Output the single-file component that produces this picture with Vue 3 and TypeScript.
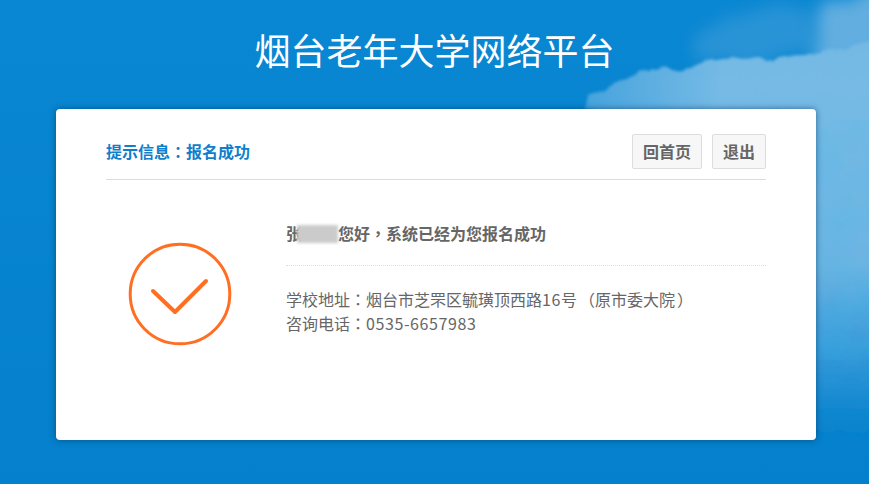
<script setup lang="ts">
const title = '烟台老年大学网络平台'
</script>

<template>
  <div class="page">
    <svg class="clouds" width="869" height="484" viewBox="0 0 869 484" aria-hidden="true">
      <defs>
        <filter id="edge" x="-10%" y="-10%" width="120%" height="120%">
          <feTurbulence type="fractalNoise" baseFrequency="0.05" numOctaves="4" seed="7" result="n" />
          <feDisplacementMap in="SourceGraphic" in2="n" scale="12" xChannelSelector="R" yChannelSelector="G" />
          <feGaussianBlur stdDeviation="1.8" />
        </filter>
        <filter id="haze" x="-30%" y="-30%" width="160%" height="160%">
          <feTurbulence type="fractalNoise" baseFrequency="0.03" numOctaves="3" seed="3" result="n" />
          <feDisplacementMap in="SourceGraphic" in2="n" scale="26" xChannelSelector="R" yChannelSelector="G" />
          <feGaussianBlur stdDeviation="8" />
        </filter>
        <filter id="mottle" x="0" y="0" width="100%" height="100%">
          <feTurbulence type="fractalNoise" baseFrequency="0.022" numOctaves="4" seed="11" />
          <feColorMatrix type="matrix" values="0 0 0 0 0.04  0 0 0 0 0.5  0 0 0 0 0.82  1.6 0 0 0 -0.62" />
        </filter>
        <linearGradient id="fade" gradientUnits="userSpaceOnUse" x1="0" y1="0" x2="0" y2="425">
          <stop offset="0" stop-color="#6fb6e3" />
          <stop offset="0.2" stop-color="#76bae5" />
          <stop offset="0.62" stop-color="#6cb4e2" />
          <stop offset="0.78" stop-color="#429fdb" />
          <stop offset="1" stop-color="#0883ce" />
        </linearGradient>
        <linearGradient id="leftFade" gradientUnits="userSpaceOnUse" x1="580" y1="0" x2="720" y2="0">
          <stop offset="0" stop-color="#fff" stop-opacity="0.55" />
          <stop offset="1" stop-color="#fff" stop-opacity="1" />
        </linearGradient>
        <mask id="bodyMask" maskUnits="userSpaceOnUse" x="0" y="0" width="869" height="484">
          <rect x="560" y="0" width="309" height="484" fill="url(#leftFade)" />
        </mask>
      </defs>
      <path filter="url(#haze)" fill="#3d9cd9" opacity="0.6" d="M688 62 L700 30 L745 22 L780 5 L815 10 L815 45 L780 62Z" />
      <path filter="url(#haze)" fill="#62aee0" d="M815 70 L812 40 L830 0 L890 -20 L890 90Z" />
      <g mask="url(#bodyMask)">
        <path filter="url(#edge)" fill="url(#fade)" d="M584 112 L590 98 L603 91 L622 80 L642 72 L668 70 L692 67 L708 61 L732 58 L775 57 L805 56 L830 50 L880 40 L880 430 L780 430 L780 112Z" />
      </g>
      <rect x="816" y="120" width="53" height="240" fill="#0a80d1" opacity="0.28" filter="url(#mottle)" />
    </svg>

    <h1 class="title">{{ title }}</h1>

    <main class="card">
      <header class="card-head">
        <h2 class="notice">提示信息<span class="cjk-mid">：</span>报名成功</h2>
        <nav class="actions">
          <a class="btn">回首页</a>
          <a class="btn">退出</a>
        </nav>
      </header>

      <section class="body">
        <div class="icon-col">
          <svg width="104" height="104" viewBox="0 0 104 104" aria-hidden="true">
            <circle cx="52" cy="52" r="49.8" fill="none" stroke="#ff6e21" stroke-width="3" />
            <path d="M25 49 L47 70 L78 39" fill="none" stroke="#ff6e21" stroke-width="4" stroke-linecap="round" stroke-linejoin="round" />
          </svg>
        </div>
        <div class="info">
          <p class="greeting">张<span class="masked"></span>您好<span class="cjk-mid">，</span>系统已经为您报名成功</p>
          <div class="details">
            <p>学校地址<span class="cjk-mid">：</span>烟台市芝罘区毓璜顶西路<span class="num">16</span>号<span class="cjk-mid paren">（</span>原市委大院<span class="cjk-mid paren">）</span></p>
            <p>咨询电话<span class="cjk-mid">：</span><span class="num">0535-6657983</span></p>
          </div>
        </div>
      </section>
    </main>
  </div>
</template>

<style>
html,
body {
  margin: 0;
  padding: 0;
}
</style>

<style scoped>
.page {
  position: relative;
  box-sizing: border-box;
  height: 484px;
  overflow: hidden;
  padding-top: 21px;
  background: linear-gradient(180deg, #0a87d2 0%, #0480cc 100%);
  font-family: "Noto Sans CJK SC", "Noto Sans", sans-serif;
  color: #666;
}
.clouds {
  position: absolute;
  left: 0;
  top: 0;
}
.title {
  position: relative;
  margin: 0 0 32px;
  height: 56px;
  line-height: 56px;
  text-align: center;
  font-size: 36px;
  font-weight: 400;
  color: #fff;
}
.card {
  position: relative;
  box-sizing: border-box;
  width: 760px;
  height: 331px;
  margin-left: 56px;
  padding: 25px 50px 0;
  background: #fff;
  border-radius: 4px;
  box-shadow: 0 0 6px rgba(0, 50, 90, 0.6);
}
.card-head {
  display: flex;
  align-items: flex-start;
  justify-content: space-between;
  height: 45px;
  border-bottom: 1px solid #ddd;
}
.notice {
  margin: 0;
  line-height: 35px;
  font-size: 16px;
  font-weight: 700;
  color: #0f7fcc;
}
.cjk-mid {
  font-family: "Noto Sans CJK TC", sans-serif;
}
.paren {
  margin-left: 2px;
}
.num {
  letter-spacing: 0.6px;
}
.actions {
  display: flex;
  gap: 10px;
}
.btn {
  box-sizing: border-box;
  height: 35px;
  line-height: 33px;
  padding: 0 10px;
  border: 1px solid #ddd;
  border-radius: 2px;
  background: #f7f7f7;
  font-size: 16px;
  font-weight: 700;
  color: #666;
}
.body {
  display: flex;
  padding-top: 34px;
}
.icon-col {
  width: 180px;
  padding-top: 28px;
  padding-left: 22px;
  box-sizing: border-box;
}
.info {
  flex: 1;
}
.greeting {
  margin: 0;
  height: 51px;
  line-height: 38px;
  font-size: 16px;
  font-weight: 700;
  border-bottom: 1px dotted #ddd;
}
.masked {
  display: inline-block;
  width: 41px;
  height: 18px;
  margin-left: -5px;
  vertical-align: -3px;
  background: #cbcbcb;
  filter: blur(1.5px);
}
.details {
  padding-top: 21px;
  font-size: 16px;
  line-height: 24px;
}
.details p {
  margin: 0;
}
</style>
